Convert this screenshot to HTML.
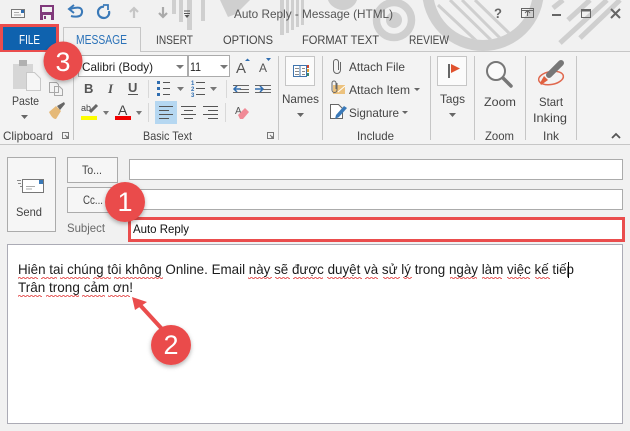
<!DOCTYPE html>
<html><head><meta charset="utf-8"><style>
html,body{margin:0;padding:0;background:#f1f1f1;width:630px;height:431px;overflow:hidden}
svg{display:block}
text{font-family:"Liberation Sans","DejaVu Sans",sans-serif;font-size:12px;fill:#444}
.b{fill:#1c1c1c;font-size:14px}
.n{fill:#fff;font-size:27px}
</style></head><body>
<svg width="630" height="431" viewBox="0 0 630 431" xmlns="http://www.w3.org/2000/svg">
<defs>
<filter id="s" x="-30%" y="-30%" width="160%" height="160%"><feDropShadow dx="0" dy="2" stdDeviation="2" flood-color="#000" flood-opacity=".3"/></filter>
<clipPath id="top"><rect x="0" y="0" width="630" height="51"/></clipPath>
<clipPath id="ringin"><circle cx="483" cy="-10" r="50"/></clipPath>
<pattern id="w" width="4" height="2" patternUnits="userSpaceOnUse"><path d="M0 1.500L1 .5L2 .5L3 1.500L4 1.500" fill="none" stroke="#e03030" stroke-width=".8"/></pattern>
</defs>
<rect width="630" height="431" fill="#f1f1f1"/>
<g clip-path="url(#top)" fill="#cfcfcf">
<rect x="172" y="0" width="4" height="14"/><rect x="179" y="0" width="4" height="22"/><rect x="187" y="0" width="5" height="30"/><rect x="201" y="0" width="4" height="21"/>
<path d="M220 0H250L236 14L228 17z"/>
<rect x="280" y="0" width="4" height="35"/><rect x="286" y="0" width="3" height="33"/><rect x="291" y="0" width="3" height="30"/>
<rect x="296" y="0" width="3" height="27"/><rect x="301" y="0" width="3" height="25"/>
<path d="M328 0h29c-2 6-8 10-14 10s-13-4-15-10z"/>
<circle cx="394" cy="20" r="17.500" fill="none" stroke="#cfcfcf" stroke-width="7.500"/><circle cx="394" cy="20" r="8"/>
<circle cx="483" cy="-10" r="55.500" fill="none" stroke="#cfcfcf" stroke-width="11"/>
<g clip-path="url(#ringin)" stroke="#cfcfcf" stroke-width="3" fill="none"><path d="M438 5L483 47M450 0L493 42M462 0L502 40M475 0L510 34"/></g>
<g stroke="#cfcfcf" stroke-width="5" fill="none"><path d="M560 43L607 0M568 20L590 0M553 8L563 0M580 38L620 0"/></g>
</g>
<!-- QAT -->
<g fill="none">
<rect x="11.500" y="9.500" width="13" height="8" stroke="#777" fill="#f8f8f8"/><path d="M14 12.500h5M14 15h7" stroke="#aaa"/><rect x="21" y="10" width="3" height="3" fill="#2f6db0"/>
<rect x="40" y="5" width="14" height="15" fill="#80397b"/><rect x="42" y="7" width="10" height="5" fill="#f1f1f1"/><rect x="43" y="15" width="8" height="5" fill="#f1f1f1"/><rect x="44" y="16" width="2" height="3" fill="#80397b"/>
<path d="M71 16c3 1 8 1 10-1 2-3 1-6-1-7-3-1-6 0-10 1" stroke="#3a79b8" stroke-width="2"/><path d="M74 5l-5 4 5 4" stroke="#3a79b8" stroke-width="2"/>
<path d="M104 7c-3-1-6 2-6 5 0 4 3 6 6 6s6-3 5-7" stroke="#3a79b8" stroke-width="2.200"/><path d="M103 5h5v5" stroke="#3a79b8" stroke-width="1.800"/>
<path d="M134 18v-9M130 12l4-4 4 4" stroke="#c6c6c6" stroke-width="2.200"/>
<path d="M163 7v9M159 13l4 4 4-4" stroke="#aaa" stroke-width="2.200"/>
<path d="M184 11h6M184 13.500h6" stroke="#555"/><path d="M184.500 15h5l-2.500 3z" fill="#555"/>
</g>
<!-- Window buttons -->
<text x="494" y="18" style="font-size:14px;font-weight:bold;fill:#666" textLength="8" lengthAdjust="spacingAndGlyphs">?</text>
<g fill="none" stroke="#666"><rect x="521.500" y="8.500" width="12" height="9"/><path d="M521 10.500h13"/><path d="M527.500 16v-5M525 13l2.500-2.500 2.500 2.500"/>
<path d="M552 15h9" stroke-width="2"/>
<rect x="581.500" y="9.500" width="9" height="8"/><path d="M581 10.500h10" stroke-width="2"/>
<path d="M611 9l9 9M620 9l-9 9" stroke-width="2"/></g>
<!-- Tabs -->
<path d="M0 51.500H630" stroke="#c6c6c6"/>
<path d="M63.500 51.500V27.500H140.500V51.500" fill="#f1f1f1" stroke="#c6c6c6"/><rect x="64" y="50" width="76" height="3" fill="#f3f3f3"/>
<rect x="1.500" y="25.500" width="56" height="26" fill="#0f62ae" stroke="#ea4d4d" stroke-width="3"/>
<text x="19" y="44" style="fill:#fff;font-size:12.500px" textLength="21" lengthAdjust="spacingAndGlyphs">FILE</text>
<text x="76" y="44" style="fill:#2b72b8;font-size:12.500px" textLength="51" lengthAdjust="spacingAndGlyphs">MESSAGE</text>
<text x="156" y="44" textLength="37" lengthAdjust="spacingAndGlyphs">INSERT</text>
<text x="223" y="44" textLength="50" lengthAdjust="spacingAndGlyphs">OPTIONS</text>
<text x="302" y="44" textLength="77" lengthAdjust="spacingAndGlyphs">FORMAT TEXT</text>
<text x="409" y="44" textLength="40" lengthAdjust="spacingAndGlyphs">REVIEW</text>
<text x="234" y="18" style="fill:#555" textLength="159" lengthAdjust="spacingAndGlyphs">Auto Reply - Message (HTML)</text>
<!-- Ribbon -->
<rect x="0" y="52" width="630" height="92" fill="#f3f3f3"/>
<rect x="64" y="50" width="76" height="3" fill="#f3f3f3"/>
<path d="M0 144.500H630" stroke="#c6c6c6"/>
<path d="M73.500 56V140M278.500 56V140M322.500 56V140M430.500 56V140M474.500 56V140M525.500 56V140M576.500 56V140" stroke="#c6c6c6"/>
<!-- clipboard -->
<rect x="13" y="64" width="20" height="25" fill="#d6d6d6"/><rect x="19" y="60" width="8" height="6" fill="#b0b0b0"/>
<path d="M26.500 72.500h8l6 6v12h-14z" fill="#f6f6f6" stroke="#c8c8c8"/>
<path d="M49.500 82.500h7l2 2v8h-9zM54.500 86.500h5l3 3v6h-8z" fill="#f3f3f3" stroke="#a8a8a8"/>
<text x="12" y="105" textLength="27" lengthAdjust="spacingAndGlyphs">Paste</text>
<path d="M21 115h7l-3.500 4z" fill="#666"/>
<path d="M49 112l7-6 5 5-5 8c-3 0-5-3-7-7z" fill="#e5b978"/><path d="M57 106l7-4 1 2-5 6z" fill="#666"/>
<text x="3" y="140" textLength="50" lengthAdjust="spacingAndGlyphs">Clipboard</text>
<path d="M62.500 132.500h6v6h-6zM65 135l3 3M68 136v2h-2" fill="none" stroke="#777"/>
<!-- font -->
<rect x="78.500" y="55.500" width="109" height="21" fill="#fff" stroke="#ababab"/>
<rect x="188.500" y="55.500" width="41" height="21" fill="#fff" stroke="#ababab"/>
<text x="82" y="71" style="fill:#222" textLength="71" lengthAdjust="spacingAndGlyphs">Calibri (Body)</text>
<text x="190" y="71" style="fill:#222" textLength="11" lengthAdjust="spacingAndGlyphs">11</text>
<path d="M176 65h8l-4 4zM220 65h8l-4 4z" fill="#777"/>
<text x="84" y="93" style="font-weight:bold;font-size:13px;fill:#555">B</text>
<text x="108" y="93" style="font-style:italic;font-size:13px;fill:#555;font-family:'Liberation Serif',serif;font-weight:bold">I</text>
<text x="128" y="92" style="font-weight:bold;font-size:13px;fill:#555">U</text><path d="M128 94.500h10" stroke="#555"/>
<path d="M148.500 80V98M226.500 80V98M148.500 103V122M225.500 103V122" stroke="#d8d8d8"/>
<g stroke="#555"><path d="M163 82.500h7M163 88.500h7M163 94.500h7M196 82.500h9M196 88.500h9M196 94.500h9"/></g>
<g fill="#2f6db0"><rect x="157" y="81" width="3" height="3"/><rect x="157" y="87" width="3" height="3"/><rect x="157" y="93" width="3" height="3"/></g>
<text x="191" y="85" style="font-size:6px;fill:#2f6db0;font-weight:bold">1</text><text x="191" y="91" style="font-size:6px;fill:#2f6db0;font-weight:bold">2</text><text x="191" y="97" style="font-size:6px;fill:#2f6db0;font-weight:bold">3</text>
<path d="M177 87h7l-3.500 4zM210 87h7l-3.500 4z" fill="#777"/>
<path d="M241 89h-7M237 86l-3 3 3 3" fill="none" stroke="#2f6db0" stroke-width="1.500"/><path d="M233 85.500h16M240 89.500h9M233 92.500h16" stroke="#666"/>
<path d="M263 89h-8M260 86l3 3-3 3" fill="none" stroke="#2f6db0" stroke-width="1.500"/><path d="M255 85.500h16M263 89.500h8M255 92.500h16" stroke="#666"/>
<text x="236" y="73" style="font-size:15px;fill:#555">A</text><path d="M245 61h5l-2.500-2.500z" fill="#2f6db0"/>
<text x="259" y="72" style="font-size:12px;fill:#555">A</text><path d="M266 58h5l-2.500 3z" fill="#2f6db0"/>
<text x="81" y="111" style="font-size:9px;fill:#444">ab</text><path d="M90 112l7-7" stroke="#666" stroke-width="3"/>
<rect x="81" y="116" width="16" height="4" fill="#fdfd00"/>
<path d="M103 111h6l-3 4z" fill="#777"/>
<text x="118" y="115" style="font-size:14px;fill:#444">A</text><rect x="115" y="116" width="16" height="4" fill="#f00000"/>
<path d="M136 111h6l-3 4z" fill="#777"/>
<rect x="155" y="101" width="22" height="23" fill="#b5d7f1"/>
<g stroke="#555"><path d="M159 106.500h14M159 110.500h10M159 114.500h14M159 118.500h10"/><path d="M181 106.500h15M184 110.500h9M181 114.500h15M184 118.500h9"/><path d="M203 106.500h15M208 110.500h10M203 114.500h15M208 118.500h10"/></g>
<text x="235" y="114" style="font-size:10px;fill:#555">A</text><path d="M238 115l7-7 4 4-6 7h-3z" fill="#f08a96"/>
<text x="143" y="140" textLength="49" lengthAdjust="spacingAndGlyphs">Basic Text</text>
<path d="M267.500 132.500h6v6h-6zM270 135l3 3M273 136v2h-2" fill="none" stroke="#777"/>
<!-- Names -->
<rect x="285.500" y="56.500" width="29" height="29" fill="#fbfbfb" stroke="#c6c6c6"/>
<path d="M293.500 65.500h13v11h-13zM300 65.500v11" fill="#fff" stroke="#3f74ad"/>
<path d="M295 68.500h4M295 71.500h4M295 74.500h4M302 68.500h3M302 71.500h3M302 74.500h3" stroke="#8a8a8a"/>
<rect x="307" y="65" width="2" height="3" fill="#d0482f"/><rect x="307" y="69" width="2" height="3" fill="#e0a030"/><rect x="307" y="73" width="2" height="3" fill="#3a8a70"/>
<text x="282" y="103" textLength="37" lengthAdjust="spacingAndGlyphs">Names</text>
<path d="M297 113h7l-3.500 4z" fill="#666"/>
<!-- Include -->
<path d="M340.500 62v8a3.500 3.500 0 0 1-7 0V62a2.500 2.500 0 0 1 5 0v8" fill="none" stroke="#666"/>
<rect x="333" y="85" width="12" height="9" fill="#ecc27e"/><path d="M338 92l7-6" stroke="#fff"/><path d="M337 83v7a2.500 2.500 0 0 1-5 0v-7a2 2 0 0 1 4 0v6" fill="none" stroke="#666"/>
<path d="M330.500 104.500h8l4 4v10h-12z" fill="#fff" stroke="#666"/><path d="M336 115l8-9 3 2-8 9-4 2z" fill="#3a79b8"/>
<text x="349" y="71" textLength="56" lengthAdjust="spacingAndGlyphs">Attach File</text>
<text x="349" y="94" textLength="61" lengthAdjust="spacingAndGlyphs">Attach Item</text>
<text x="349" y="117" textLength="50" lengthAdjust="spacingAndGlyphs">Signature</text>
<path d="M414 88h6l-3 3zM402 111h6l-3 3z" fill="#666"/>
<text x="357" y="140" textLength="37" lengthAdjust="spacingAndGlyphs">Include</text>
<!-- Tags -->
<rect x="437.500" y="56.500" width="29" height="29" fill="#fbfbfb" stroke="#c6c6c6"/>
<rect x="448" y="64" width="2" height="14" fill="#666"/><path d="M451 64l9 4.500-9 4.500z" fill="#e0522e"/>
<text x="440" y="103" textLength="25" lengthAdjust="spacingAndGlyphs">Tags</text>
<path d="M449 113h7l-3.500 4z" fill="#666"/>
<!-- Zoom -->
<circle cx="496" cy="71" r="9" fill="#fafafa" stroke="#777" stroke-width="2"/><path d="M503 78l8 8" stroke="#777" stroke-width="3.500" stroke-linecap="round"/>
<text x="484" y="106" textLength="32" lengthAdjust="spacingAndGlyphs">Zoom</text>
<text x="485" y="140" textLength="29" lengthAdjust="spacingAndGlyphs">Zoom</text>
<!-- Ink -->
<ellipse cx="551" cy="78" rx="12.500" ry="6.500" fill="none" stroke="#e0684e" stroke-width="1.500" transform="rotate(-10 551 78)"/>
<path d="M549 75l12-12" stroke="#777" stroke-width="6" stroke-linecap="round"/>
<path d="M544 76l4 4-7 5-1-2z" fill="#e0603e"/>
<text x="539" y="106" textLength="24" lengthAdjust="spacingAndGlyphs">Start</text>
<text x="533" y="122" textLength="34" lengthAdjust="spacingAndGlyphs">Inking</text>
<text x="543" y="140" textLength="16" lengthAdjust="spacingAndGlyphs">Ink</text>
<path d="M612 138l4-4 4 4" fill="none" stroke="#555" stroke-width="1.800"/>
<!-- Compose -->
<rect x="7.500" y="157.500" width="48" height="74" fill="#f6f6f6" stroke="#ababab"/>
<path d="M22.500 179.500h21v13h-21z" fill="#fff" stroke="#777"/><rect x="39" y="180" width="4" height="4" fill="#3a79b8"/><path d="M26 186.500h9M26 189h6" stroke="#aaa"/><path d="M17 180.500h4M18 183.500h3M20 186.500h2" stroke="#888"/>
<text x="16" y="216" textLength="26" lengthAdjust="spacingAndGlyphs">Send</text>
<rect x="67.500" y="157.500" width="50" height="25" fill="#f6f6f6" stroke="#ababab"/>
<rect x="67.500" y="187.500" width="50" height="25" fill="#f6f6f6" stroke="#ababab"/>
<text x="82" y="174" textLength="20" lengthAdjust="spacingAndGlyphs">To...</text>
<text x="83" y="204" textLength="20" lengthAdjust="spacingAndGlyphs">Cc...</text>
<rect x="129.500" y="159.500" width="493" height="20" fill="#fff" stroke="#ababab"/>
<rect x="129.500" y="189.500" width="493" height="20" fill="#fff" stroke="#ababab"/>
<text x="67" y="232" style="fill:#6a6a6a" textLength="38" lengthAdjust="spacingAndGlyphs">Subject</text>
<rect x="129.500" y="218.500" width="494" height="22" fill="#fff" stroke="#ea4d4d" stroke-width="3"/>
<text x="133" y="233" style="fill:#111" textLength="56" lengthAdjust="spacingAndGlyphs">Auto Reply</text>
<rect x="7.500" y="244.500" width="615" height="179" fill="#fff" stroke="#ababb5"/>
<text x="18" y="274" class="b" textLength="556" lengthAdjust="spacingAndGlyphs">Hiên tai chúng tôi không Online. Email này sẽ được duyệt và sử lý trong ngày làm việc kế tiếp</text>
<text x="18" y="292" class="b" textLength="115" lengthAdjust="spacingAndGlyphs">Trân trong cảm ơn!</text>
<path d="M568.500 262V278" stroke="#000"/>
<g fill="url(#w)">
<rect x="18" y="277" width="20" height="2"/><rect x="41" y="277" width="16" height="2"/><rect x="60" y="277" width="30" height="2"/><rect x="93" y="277" width="18" height="2"/><rect x="114" y="277" width="49" height="2"/>
<rect x="248" y="277" width="24" height="2"/><rect x="275" y="277" width="15" height="2"/><rect x="293" y="277" width="30" height="2"/><rect x="327" y="277" width="35" height="2"/><rect x="365" y="277" width="13" height="2"/><rect x="383" y="277" width="17" height="2"/><rect x="403" y="277" width="9" height="2"/><rect x="450" y="277" width="27" height="2"/><rect x="482" y="277" width="20" height="2"/><rect x="507" y="277" width="23" height="2"/><rect x="535" y="277" width="15" height="2"/>
<rect x="18" y="295" width="24" height="2"/><rect x="46" y="295" width="33" height="2"/><rect x="82" y="295" width="23" height="2"/><rect x="108" y="295" width="22" height="2"/>
</g>
<!-- annotations -->
<path d="M162 329L140 305" stroke="#ea4d4d" stroke-width="4"/><path d="M132 297l15 5-12 8z" fill="#ea4d4d"/>
<g filter="url(#s)"><circle cx="63" cy="61" r="19.500" fill="#ea4b4b"/><circle cx="125" cy="202" r="20" fill="#ea4b4b"/><circle cx="171" cy="345" r="20" fill="#ea4b4b"/></g>
<text x="63" y="71" class="n" text-anchor="middle">3</text>
<text x="125" y="211" class="n" text-anchor="middle">1</text>
<text x="171" y="354" class="n" text-anchor="middle">2</text>
</svg>
</body></html>
